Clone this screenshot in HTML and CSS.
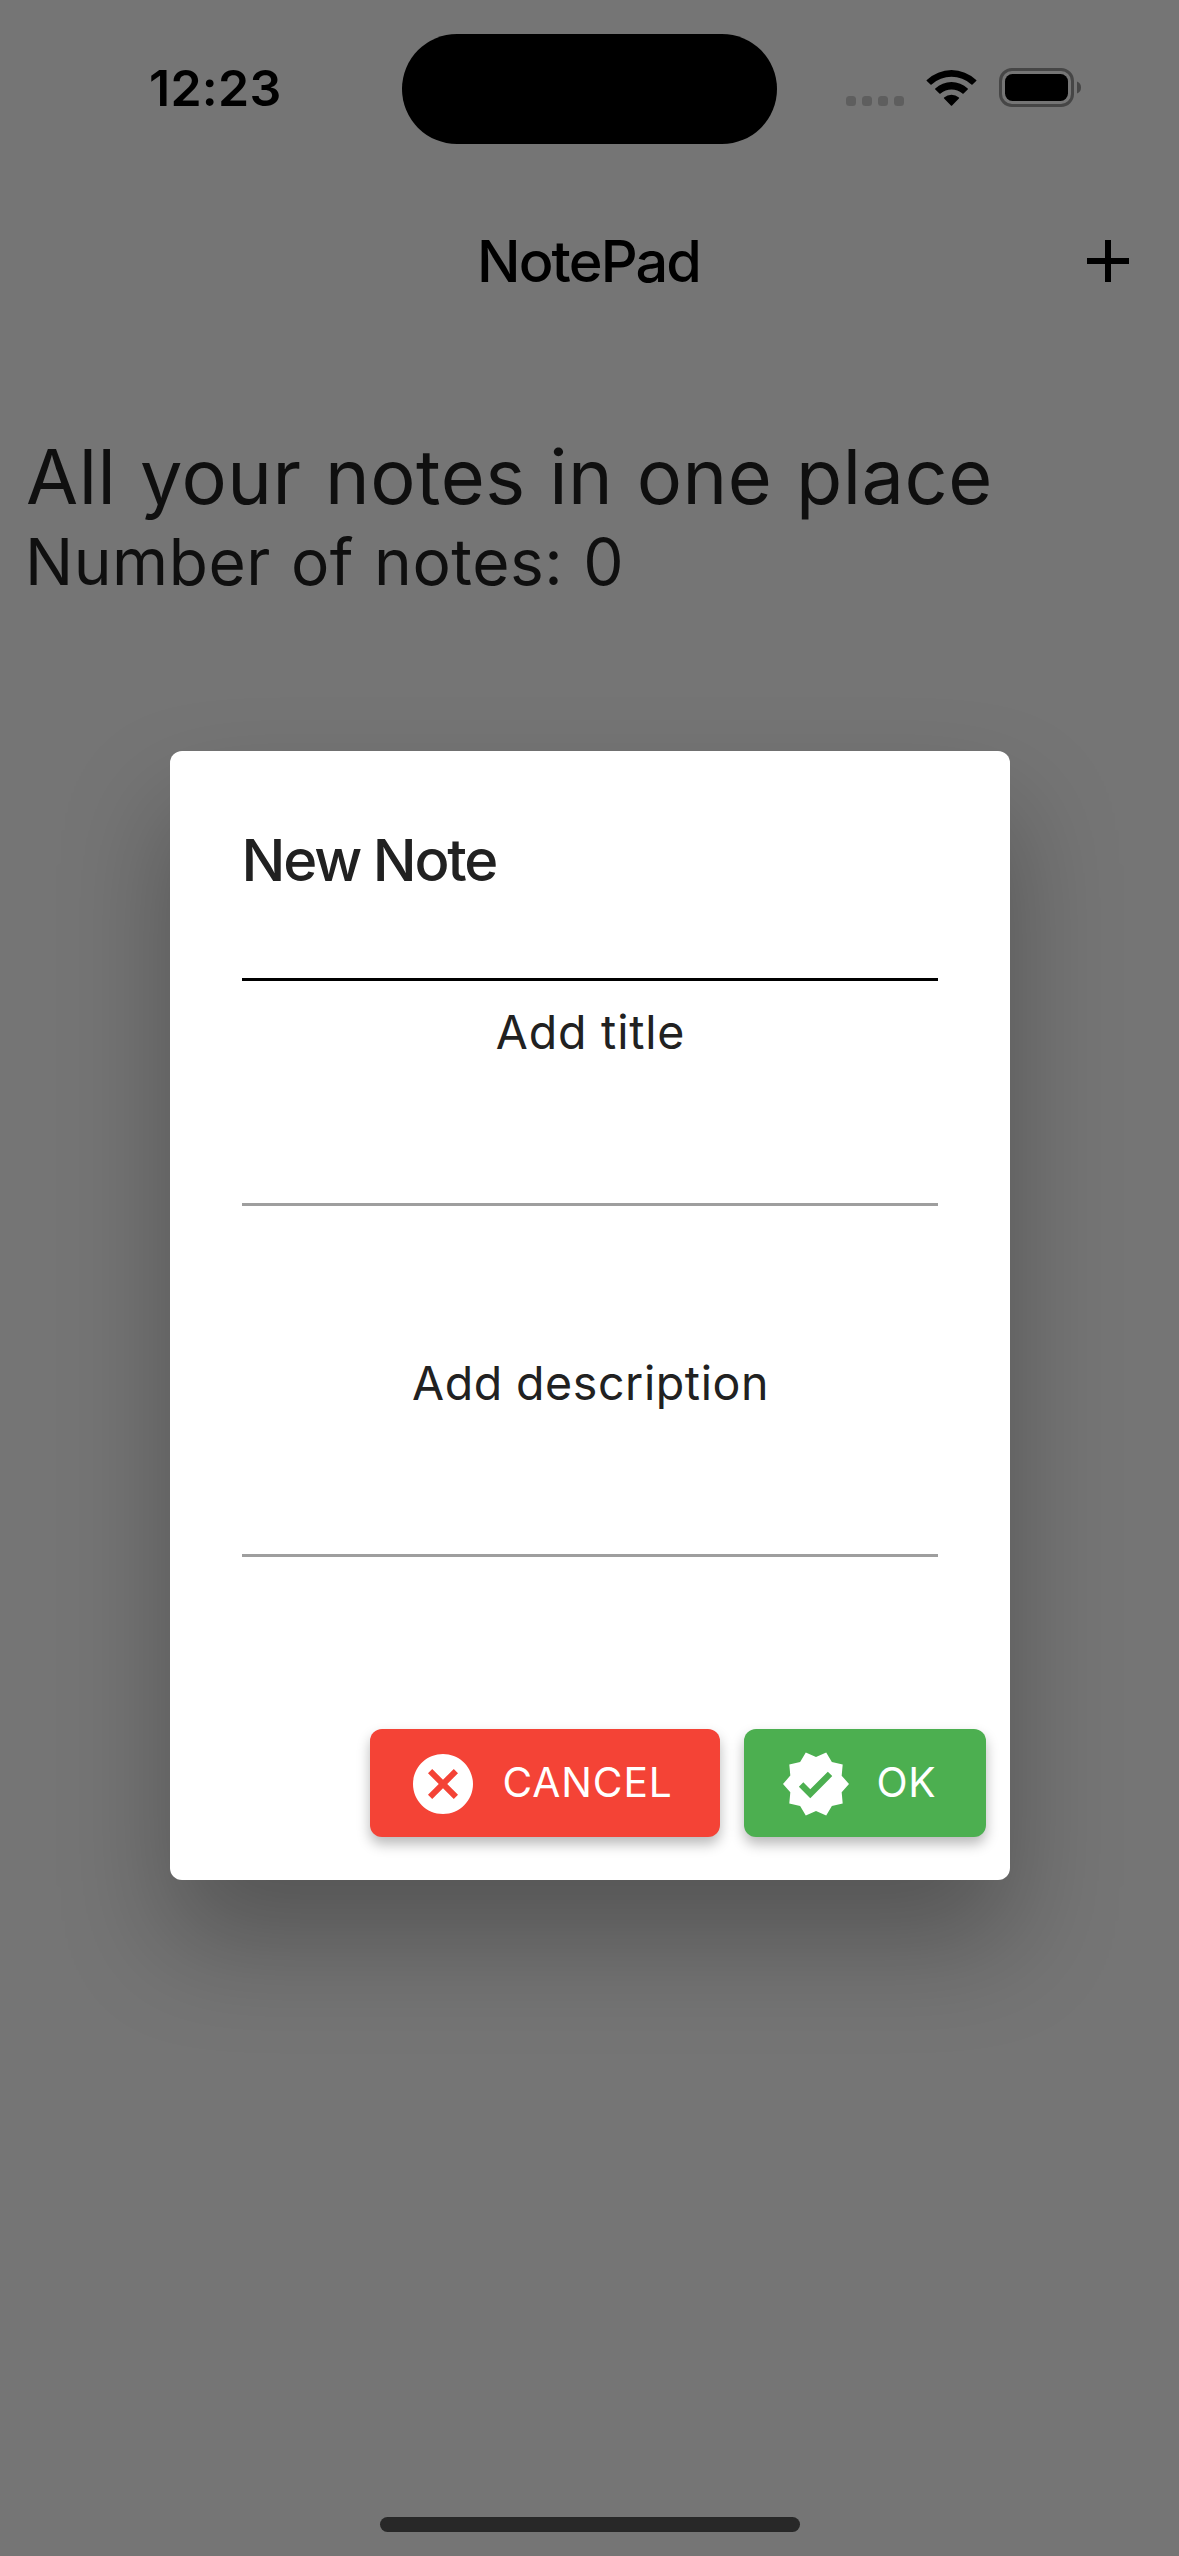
FILE: index.html
```
<!DOCTYPE html>
<html lang="en">
<head>
<meta charset="utf-8">
<title>NotePad</title>
<link rel="stylesheet" href="styles.css">
</head>
<body>
<div class="screen">
  <header class="status-bar">
    <span class="time">12:23</span>
    <span class="island"></span>
    <div class="status-icons">
      <svg width="58" height="39" viewBox="0 0 58 39" fill="#5e5e5e">
        <rect x="0" y="28" width="10" height="10" rx="3.5"/>
        <rect x="16" y="28" width="10" height="10" rx="3.5"/>
        <rect x="32" y="28" width="10" height="10" rx="3.5"/>
        <rect x="48" y="28" width="10" height="10" rx="3.5"/>
      </svg>
      <svg width="51" height="39" viewBox="0 -1 51 39">
        <path d="M.8 10.9A36 36 0 0 1 50.2 10.9Q50.8 11.4 50.2 12L46.5 15.4Q46 15.900 45.400 15.400A30 30 0 0 0 5.600 15.400Q5 15.900 4.500 15.400L.8 12Q.2 11.400 .8 10.900Z"/>
        <path d="M9.300 19.400A24 24 0 0 1 41.700 19.400Q42.300 20 41.700 20.600L37.600 24.500Q37 25 36.400 24.500A16.500 16.500 0 0 0 14.600 24.500Q14 25 13.400 24.500L9.300 20.600Q8.700 20 9.300 19.400Z"/>
        <path d="M18.100 28.500A11.500 11.500 0 0 1 32.900 28.500Q33.500 29 32.900 29.600L26.100 36.500Q25.500 37.100 24.900 36.500L18.100 29.600Q17.500 29 18.100 28.500Z"/>
      </svg>
      <svg width="83" height="39" viewBox="0 0 83 39">
        <rect x="1.500" y="1.500" width="72" height="36" rx="11.500" fill="none" stroke="#464646" stroke-width="3"/>
        <rect x="6" y="6" width="63" height="27" rx="7.500"/>
        <path d="M78 13.500Q82 15 82 19.500T78 25.500Z" fill="#464646"/>
      </svg>
    </div>
  </header>

  <div class="app-bar">
    <h1 class="app-title">NotePad</h1>
    <svg class="add" width="42" height="42" viewBox="5 5 14 14"><path d="M19 13h-6v6h-2v-6H5v-2h6V5h2v6h6v2z"/></svg>
  </div>

  <main class="notes">
    <p class="headline">All your notes in one place</p>
    <p class="count">Number of notes: 0</p>
  </main>

  <footer class="home"><span class="home-indicator"></span></footer>

  <div class="overlay">
    <section class="dialog">
      <h2 class="dialog-title">New Note</h2>
      <div class="field-line field-line-active"></div>
      <p class="label label-title">Add title</p>
      <div class="field-line"></div>
      <p class="label label-description">Add description</p>
      <div class="field-line"></div>
      <div class="actions">
        <button class="button button-cancel">
          <svg class="button-icon" viewBox="0 0 24 24"><path d="M12 2C6.470 2 2 6.470 2 12s4.470 10 10 10 10-4.470 10-10S17.530 2 12 2zm5 13.590L15.590 17 12 13.410 8.410 17 7 15.590 10.590 12 7 8.410 8.410 7 12 10.590 15.590 7 17 8.410 13.410 12 17 15.590z"/></svg>
          <span class="button-text">CANCEL</span>
        </button>
        <button class="button button-ok">
          <svg class="button-icon" viewBox="0 0 24 24"><path d="M23 12l-2.440-2.790.340-3.690-3.610-.820L15.400 1.500 12 2.960 8.600 1.500 6.710 4.690 3.100 5.500l.340 3.700L1 12l2.440 2.790-.340 3.700 3.610.820L8.600 22.500l3.400-1.470 3.400 1.460 1.890-3.190 3.610-.820-.340-3.690L23 12zM10.090 16.720l-3.800-3.810 1.480-1.480 2.320 2.330 5.850-5.870 1.480 1.480-7.330 7.350z"/></svg>
          <span class="button-text">OK</span>
        </button>
      </div>
    </section>
  </div>
</div>
</body>
</html>
```
FILE: styles.css
```
* { box-sizing: border-box; margin: 0; }

body {
  background: #757575;
  font-family: Inter, "Liberation Sans", sans-serif;
  color: #000;
}

.screen {
  position: relative;
  display: flex;
  flex-direction: column;
  width: 1179px;
  height: 2556px;
  overflow: hidden;
  white-space: nowrap;
}

/* Status bar */
.status-bar {
  display: grid;
  grid-template-columns: 402px 375px 1fr;
  align-items: start;
  height: 177px;
}
.time {
  padding: 58px 0 0 149px;
  font-size: 50px;
  font-weight: 600;
  line-height: 60px;
  letter-spacing: 0.25px;
}
.island {
  height: 110px;
  margin-top: 34px;
  border-radius: 55px;
  background: #000;
}
.status-icons {
  display: flex;
  gap: 22px;
  padding: 68px 0 0 69px;
}

/* App bar */
.app-bar {
  display: grid;
  grid-template-columns: 1fr auto 1fr;
  align-items: center;
  height: 168px;
}
.app-title {
  grid-column: 2;
  padding-right: 2px;
  font-size: 57.6px;
  font-weight: 500;
  line-height: 70px;
  letter-spacing: -1.88px;
}
.add {
  justify-self: end;
  margin-right: 50px;
}

/* Notes summary */
.notes {
  flex: 1;
  padding: 86px 25px 0;
  color: #0f0f0f;
}
.headline {
  padding-left: 1px;
  font-size: 75.6px;
  line-height: 91px;
  letter-spacing: 0.54px;
  word-spacing: 1.7px;
}
.count {
  font-size: 64px;
  line-height: 79px;
  letter-spacing: 0.53px;
  word-spacing: 1.5px;
}

.home {
  display: flex;
  justify-content: center;
  padding-bottom: 24px;
}
.home-indicator {
  width: 420px;
  height: 15px;
  border-radius: 7.5px;
  background: #282828;
}

/* Dialog */
.overlay {
  position: absolute;
  inset: 0;
  display: grid;
  place-items: center;
  padding: 177px 0 102px;
}
.dialog {
  width: 840px;
  height: 1129px;
  padding: 74px 72px 0;
  border-radius: 12px;
  background: #fff;
  box-shadow: 0 60px 108px rgba(0, 0, 0, 0.28);
  color: #212121;
}
.dialog-title {
  margin-bottom: 83px;
  font-size: 58px;
  font-weight: 500;
  line-height: 70px;
  letter-spacing: -2.17px;
  word-spacing: -0.6px;
}
.field-line {
  height: 3px;
  background: #9e9e9e;
}
.field-line-active { background: #000; }
.label {
  padding-left: 2px;
  font-size: 46.5px;
  line-height: 56px;
  text-align: center;
}
.label-title {
  margin: 23px 0 143px;
  letter-spacing: 0.8px;
}
.label-description {
  margin: 149px 0 143px;
  letter-spacing: 0.6px;
  word-spacing: -0.5px;
}
.actions {
  display: flex;
  justify-content: flex-end;
  gap: 24px;
  margin: 172px -48px 0 0;
}
.button {
  display: flex;
  align-items: center;
  height: 108px;
  border: 0;
  border-radius: 12px;
  box-shadow: 0 7px 13px rgba(0, 0, 0, 0.28);
  color: #fff;
  font-family: inherit;
  font-size: 40.7px;
}
.button-cancel {
  width: 350.5px;
  padding: 0 0 0 37px;
  gap: 24px;
  background: #f44336;
  letter-spacing: 0.88px;
}
.button-ok {
  width: 241.5px;
  padding: 0 0 0 36px;
  gap: 24.5px;
  background: #4caf50;
  letter-spacing: 0.58px;
}
.button-icon {
  width: 72px;
  height: 72px;
  margin-top: 2px;
  fill: #fff;
}
.button-text {
  padding-bottom: 1px;
  line-height: 49px;
}
```
